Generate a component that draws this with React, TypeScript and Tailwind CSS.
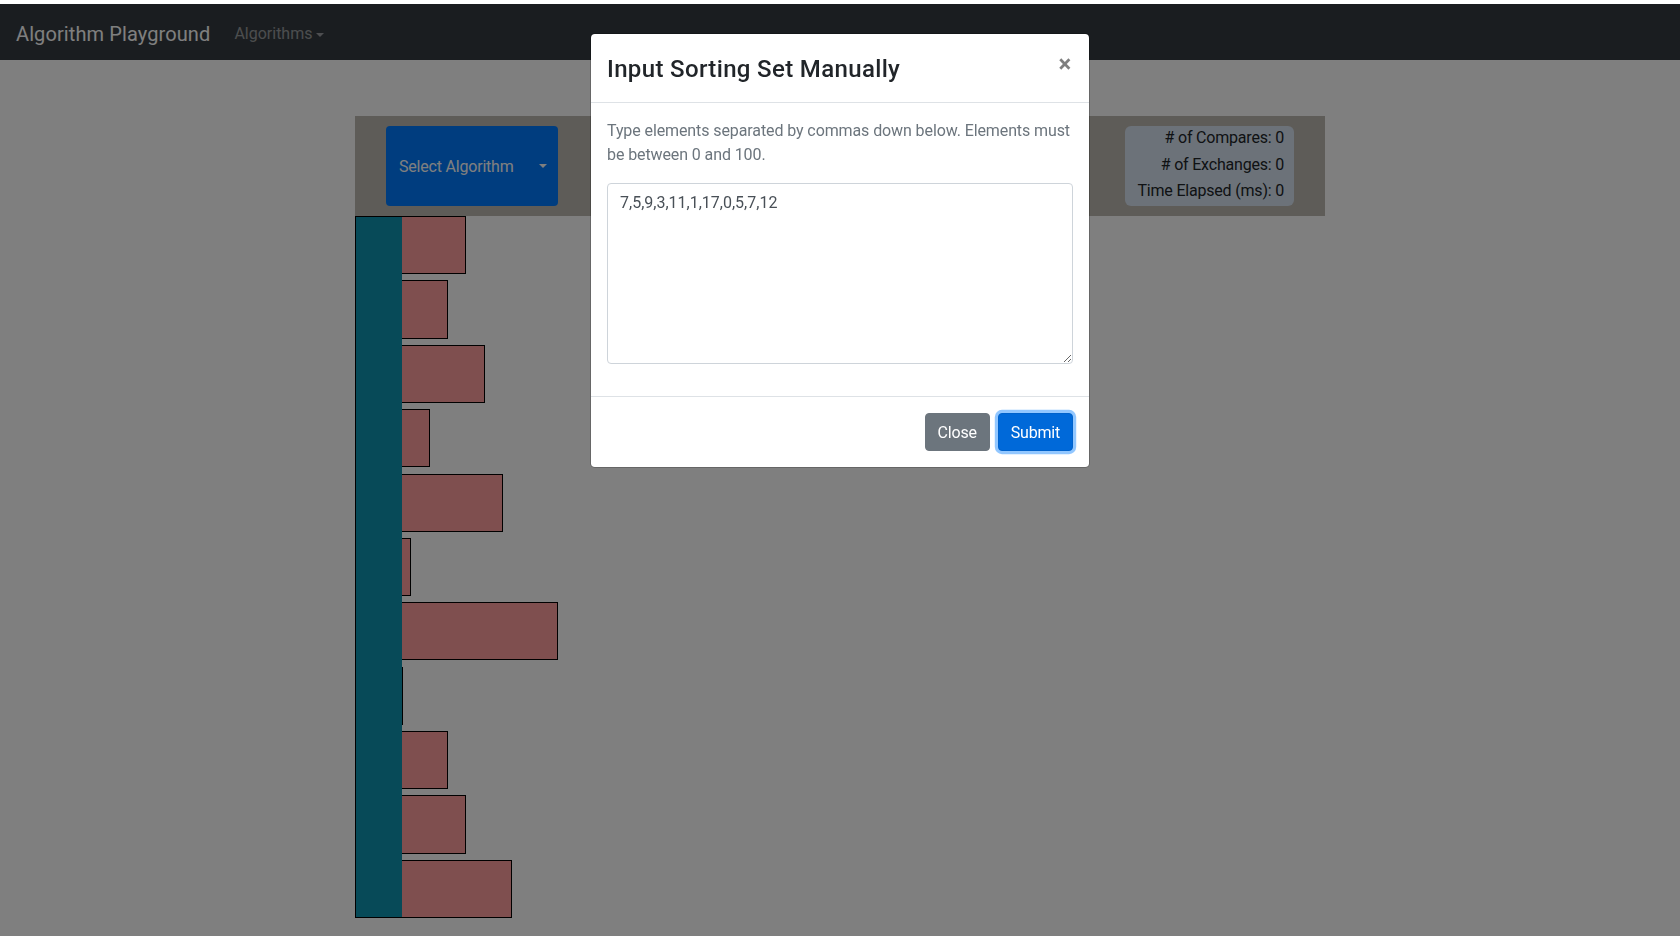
import { JSX } from "react";

const values = [7, 5, 9, 3, 11, 1, 17, 0, 5, 7, 12];
const unit = 9.2;

const font = "font-['Roboto','Liberation_Sans',sans-serif] tracking-[-0.2px]";

const Caret = ({ className = "" }: { className?: string }): JSX.Element => (
  <span
    className={`inline-block w-0 h-0 border-x-[4.8px] border-x-transparent border-t-[4.8px] ${className}`}
  />
);

const Navbar = (): JSX.Element => (
  <nav className="flex items-center h-[56px] bg-[#343a40] px-4">
    <span className="pt-[4px] text-[20px] leading-[30px] tracking-[0.1px] text-white mr-4">
      Algorithm Playground
    </span>
    <span className="flex items-center pt-[4px] px-2 text-[16px] tracking-[0px] text-white/50">
      Algorithms
      <Caret className="border-t-white/50 ml-[4px] mt-[1px]" />
    </span>
  </nav>
);

const Toolbar = (): JSX.Element => (
  <div className="flex items-center justify-between bg-[#bcb8b0] px-[31px] py-[10px]">
    <button className="flex items-center justify-between w-[172px] h-[80px] rounded-[4px] bg-[#007bff] pl-[13px] pr-[11px] text-[16px] text-white">
      <span className="pt-[2px]">Select Algorithm</span>
      <Caret className="border-t-white" />
    </button>
    <div className="flex flex-col items-end justify-center w-[169px] h-[80px] rounded-[6px] bg-[#d8e4f2] px-[10px] pb-[2px] text-[16px] leading-[26.6px] whitespace-nowrap text-[#212529]">
      <span># of Compares: 0</span>
      <span># of Exchanges: 0</span>
      <span>Time Elapsed (ms): 0</span>
    </div>
  </div>
);

const Bars = (): JSX.Element => (
  <div className="flex flex-row">
    <div className="w-[47px] bg-[#0f95b0] border-l border-y border-black" />
    <div className="flex flex-col gap-[6.2px]">
      {values.map((v, i) => (
        <div
          key={i}
          className="h-[58.2px] bg-[#ff9e9e] border-y border-r border-black"
          style={{ width: `${Math.max(1, v * unit)}px` }}
        />
      ))}
    </div>
  </div>
);

const Modal = (): JSX.Element => (
  <div className="fixed inset-0 flex justify-center pt-[33px]">
    <div className="flex flex-col w-[500px] h-fit bg-white bg-clip-padding border border-black/20 rounded-[4.8px]">
      <div className="flex items-start justify-between p-4 border-b border-[#dee2e6]">
        <h4 className="pt-[2px] text-[24px] leading-[34px] tracking-[0.35px] font-medium text-[#212529]">
          Input Sorting Set Manually
        </h4>
        <button className="p-4 -my-4 -ml-4 -mr-[14px] ml-auto pt-[18px] text-[24px] leading-none font-bold text-black opacity-50">
          ×
        </button>
      </div>
      <div className="flex flex-col p-4">
        <p className="mb-4 text-[16px] leading-6 tracking-[-0.1px] text-[#6c757d]">
          Type elements separated by commas down below. Elements must be between 0 and 100.
        </p>
        <textarea
          defaultValue="7,5,9,3,11,1,17,0,5,7,12"
          className="w-full h-[181px] mb-4 px-3 pt-[7px] pb-[5px] text-[16px] leading-6 tracking-[0px] text-[#495057] border border-[#ced4da] rounded-[4px] outline-none"
        />
      </div>
      <div className="flex items-center justify-end p-3 border-t border-[#dee2e6]">
        <button className="m-1 px-3 pt-[7px] pb-[5px] text-[16px] leading-6 text-white bg-[#6c757d] border border-[#6c757d] rounded-[4px]">
          Close
        </button>
        <button className="m-1 px-3 pt-[7px] pb-[5px] text-[16px] leading-6 text-white bg-[#0069d9] border border-[#0062cc] rounded-[4px] shadow-[0_0_0_3.2px_rgba(38,143,255,0.5)]">
          Submit
        </button>
      </div>
    </div>
  </div>
);

export default function App(): JSX.Element {
  return (
    <div className={`relative min-h-screen bg-white ${font}`}>
      <div className="h-[4px]" />
      <Navbar />
      <main className="flex flex-col w-[970px] mx-auto mt-[56px]">
        <Toolbar />
        <Bars />
      </main>
      <div className="fixed inset-x-0 bottom-0 top-[4px] bg-black/50" />
      <Modal />
    </div>
  );
}
